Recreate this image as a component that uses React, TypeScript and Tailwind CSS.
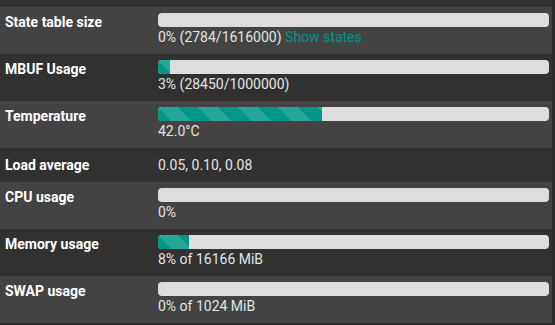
import React from "react";

type Row = {
  label: string;
  pct?: number;
  text: string;
  link?: string;
  light: boolean;
};

const rows: Row[] = [
  { label: "State table size", pct: 0, text: "0% (2784/1616000)", link: "Show states", light: true },
  { label: "MBUF Usage", pct: 3, text: "3% (28450/1000000)", light: false },
  { label: "Temperature", pct: 42, text: "42.0°C", light: true },
  { label: "Load average", text: "0.05, 0.10, 0.08", light: false },
  { label: "CPU usage", pct: 0, text: "0%", light: true },
  { label: "Memory usage", pct: 8, text: "8% of 16166 MiB", light: false },
  { label: "SWAP usage", pct: 0, text: "0% of 1024 MiB", light: true },
];

function Bar({ pct }: { pct: number }) {
  return (
    <div className="h-[14px] w-full rounded-[4px] bg-[#dddddd] overflow-hidden">
      <div
        className="h-full bg-[#009688] bg-[linear-gradient(45deg,rgba(255,255,255,0.15)_25%,transparent_25%,transparent_50%,rgba(255,255,255,0.15)_50%,rgba(255,255,255,0.15)_75%,transparent_75%,transparent)] bg-[length:40px_40px]"
        style={{ width: `${pct}%` }}
      />
    </div>
  );
}

export default function App() {
  return (
    <div className="w-[555px] h-[325px] bg-[#2c2c2c] font-['Roboto',sans-serif] text-[14px] leading-[20px] overflow-hidden">
      <div className="w-[552px]">
        <div className="h-[7px] bg-[#313131]" />
        {rows.map((r) => (
          <div
            key={r.label}
            className={`flex ${r.light ? "bg-[#434343]" : "bg-[#313131]"} ${
              r.pct === undefined ? "h-[34px] pt-[7px]" : "h-[47px] pt-[6px]"
            }`}
          >
            <div
              className={`w-[153px] shrink-0 pl-[5px] font-bold text-white ${
                r.pct === undefined ? "" : "-mt-[1px]"
              }`}
            >
              {r.label}
            </div>
            <div className="flex-1 pl-[5px] pr-[3px] text-[#e4e4e4]">
              {r.pct !== undefined && <Bar pct={r.pct} />}
              <div>
                {r.text}
                {r.link && (
                  <>
                    {" "}
                    <span className="text-[#009688]">{r.link}</span>
                  </>
                )}
              </div>
            </div>
          </div>
        ))}
      </div>
    </div>
  );
}
